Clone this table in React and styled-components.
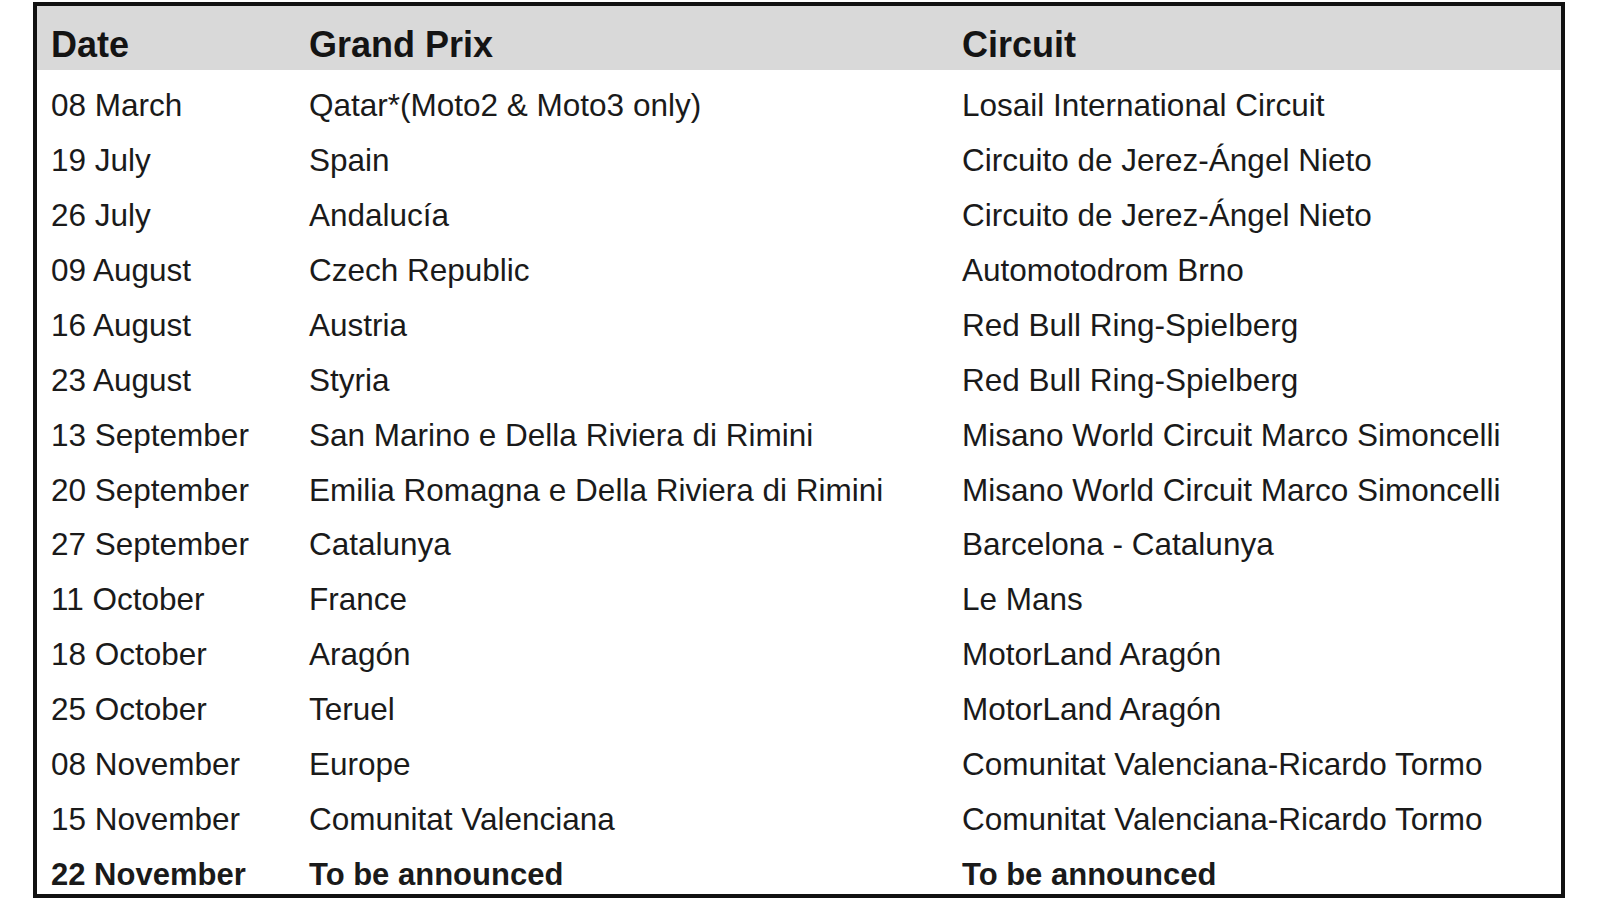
import React from 'react';
import styled, { createGlobalStyle } from 'styled-components';

const GlobalStyle = createGlobalStyle`
  html, body {
    margin: 0;
    padding: 0;
    background: #ffffff;
  }
  body {
    font-family: "Liberation Sans", Arial, sans-serif;
    color: #1a1a1a;
  }
`;

const Frame = styled.div`
  box-sizing: border-box;
  width: 1532px;
  height: 896px;
  margin: 2px 0 0 33px;
  border: 4px solid #111;
  display: flex;
  flex-direction: column;
  background: #fff;
`;

const columns = '258px 653px 1fr';

const HeaderRow = styled.div`
  display: grid;
  grid-template-columns: ${columns};
  height: 64px;
  flex: none;
  background: #d9d9d9;
`;

const HeadCell = styled.div`
  padding: 21px 0 0 14px;
  font-size: 36px;
  line-height: 36px;
  font-weight: bold;
  color: #141414;
  white-space: nowrap;
`;

const Body = styled.div`
  flex: 1;
  display: grid;
  grid-template-rows: repeat(15, 1fr);
`;

const Row = styled.div`
  display: grid;
  grid-template-columns: ${columns};
`;

const Cell = styled.div`
  padding: 20px 0 0 14px;
  font-size: ${(p) => (p.$bold ? '31px' : '31.5px')};
  line-height: 31px;
  font-weight: ${(p) => (p.$bold ? 'bold' : 'normal')};
  color: #1a1a1a;
  white-space: nowrap;
`;

const races = [
  ['08 March', 'Qatar*(Moto2 & Moto3 only)', 'Losail International Circuit'],
  ['19 July', 'Spain', 'Circuito de Jerez-Ángel Nieto'],
  ['26 July', 'Andalucía', 'Circuito de Jerez-Ángel Nieto'],
  ['09 August', 'Czech Republic', 'Automotodrom Brno'],
  ['16 August', 'Austria', 'Red Bull Ring-Spielberg'],
  ['23 August', 'Styria', 'Red Bull Ring-Spielberg'],
  ['13 September', 'San Marino e Della Riviera di Rimini', 'Misano World Circuit Marco Simoncelli'],
  ['20 September', 'Emilia Romagna e Della Riviera di Rimini', 'Misano World Circuit Marco Simoncelli'],
  ['27 September', 'Catalunya', 'Barcelona - Catalunya'],
  ['11 October', 'France', 'Le Mans'],
  ['18 October', 'Aragón', 'MotorLand Aragón'],
  ['25 October', 'Teruel', 'MotorLand Aragón'],
  ['08 November', 'Europe', 'Comunitat Valenciana-Ricardo Tormo'],
  ['15 November', 'Comunitat Valenciana', 'Comunitat Valenciana-Ricardo Tormo'],
  ['22 November', 'To be announced', 'To be announced', true],
];

const App = () => (
  <>
    <GlobalStyle />
    <Frame>
      <HeaderRow>
        <HeadCell>Date</HeadCell>
        <HeadCell>Grand Prix</HeadCell>
        <HeadCell>Circuit</HeadCell>
      </HeaderRow>
      <Body>
        {races.map(([date, gp, circuit, bold]) => (
          <Row key={date}>
            <Cell $bold={bold}>{date}</Cell>
            <Cell $bold={bold}>{gp}</Cell>
            <Cell $bold={bold}>{circuit}</Cell>
          </Row>
        ))}
      </Body>
    </Frame>
  </>
);

export default App;
